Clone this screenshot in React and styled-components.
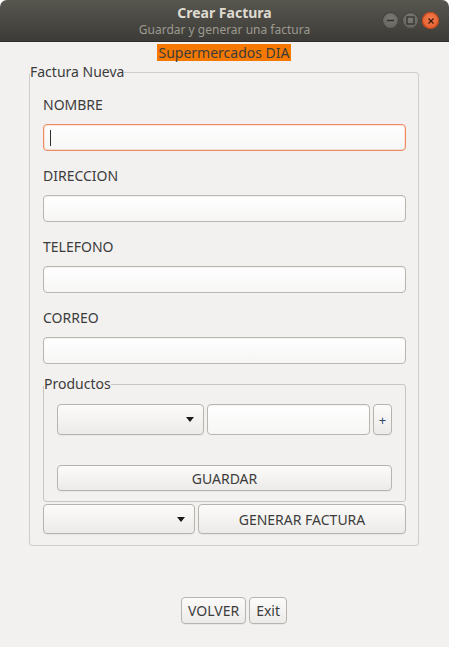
import React from 'react';
import styled, { createGlobalStyle } from 'styled-components';

const GlobalStyle = createGlobalStyle`
  html, body {
    margin: 0;
    padding: 0;
    background: #ffffff;
  }
  body {
    font-family: "Noto Sans", "DejaVu Sans", sans-serif;
    color: #3c3c3c;
  }
`;

const Window = styled.div`
  width: 449px;
  height: 647px;
  display: flex;
  flex-direction: column;
  background: #f2f1f0;
  border-radius: 7px 7px 0 0;
  overflow: hidden;
`;

const TitleBar = styled.div`
  height: 42px;
  flex: none;
  position: relative;
  display: flex;
  flex-direction: column;
  align-items: center;
  justify-content: center;
  gap: 2px;
  background: linear-gradient(#57564f, #3c3b37);
  border-bottom: 1px solid #2e2d2a;
  box-sizing: border-box;
`;

const Title = styled.div`
  color: #dfdbd2;
  font-weight: bold;
  font-size: 14px;
  line-height: 16px;
`;

const Subtitle = styled.div`
  color: #9d9a91;
  font-size: 12px;
  line-height: 14px;
`;

const WindowControls = styled.div`
  position: absolute;
  right: 10px;
  top: 12px;
  display: flex;
  gap: 3px;
`;

const Control = styled.div`
  width: 17px;
  height: 17px;
  border-radius: 50%;
  display: flex;
  align-items: center;
  justify-content: center;
  background: ${p => (p.close ? 'radial-gradient(circle at 50% 40%, #f27d4f, #e05424)' : 'radial-gradient(circle at 50% 40%, #7b7a74, #5c5b56)')};
  box-shadow: inset 0 0 0 1px ${p => (p.close ? '#b8451c' : '#3f3e3a')};
`;

const Body = styled.div`
  flex: 1;
  display: flex;
  flex-direction: column;
  align-items: center;
  padding-top: 2px;
  padding-right: 1px;
`;

const Banner = styled.div`
  background: #f57900;
  color: #3c3c3c;
  font-size: 14px;
  line-height: 17px;
  padding: 0 1px;
`;

const Group = styled.fieldset`
  margin: ${p => p.$top || 0}px 0 0 0;
  padding: 0;
  border: 1px solid ${p => (p.$inner ? '#c9c6c2' : '#cfcdca')};
  border-radius: 3px;
  width: ${p => p.$width}px;
  box-sizing: border-box;
  min-width: 0;
`;

const Legend = styled.legend`
  padding: 0;
  font-size: 14px;
  line-height: 16px;
  color: #3c3c3c;
`;

const GroupContent = styled.div`
  display: flex;
  flex-direction: column;
  padding: ${p => p.$pad};
`;

const Field = styled.div`
  display: flex;
  flex-direction: column;
  margin-bottom: ${p => (p.$last ? 0 : 15)}px;
`;

const Label = styled.div`
  font-size: 14px;
  line-height: 20px;
  margin-bottom: 9px;
  color: #3c3c3c;
`;

const TextInput = styled.div`
  height: ${p => p.$h || 27}px;
  box-sizing: border-box;
  border: 1px solid ${p => (p.$focus ? '#ef8a62' : '#b9b6b0')};
  border-radius: 4px;
  background: linear-gradient(#ffffff, #f6f6f5);
  box-shadow: ${p => (p.$focus ? 'inset 0 0 0 1px rgba(240,150,110,0.25)' : 'inset 0 1px 1px rgba(0,0,0,0.06)')};
  display: flex;
  align-items: center;
  padding-left: 6px;
  flex: ${p => (p.$grow ? 1 : 'none')};
`;

const Caret = styled.div`
  width: 1px;
  height: 16px;
  background: #2e2e2e;
`;

const Row = styled.div`
  display: flex;
  gap: 3px;
  margin-top: ${p => p.$top || 0}px;
`;

const ButtonBase = styled.div`
  height: ${p => p.$h || 27}px;
  box-sizing: border-box;
  border: 1px solid #b7b4ae;
  border-radius: 4px;
  background: linear-gradient(#fbfbfa, #edebe9);
  box-shadow: 0 1px 0 rgba(0,0,0,0.04);
  display: flex;
  align-items: center;
  justify-content: center;
  font-size: 14px;
  color: #3c3c3c;
  width: ${p => (p.$w ? p.$w + 'px' : 'auto')};
  flex: ${p => (p.$grow ? 1 : 'none')};
  padding: ${p => (p.$w || p.$grow ? 0 : '0 6px')};
`;

const Combo = styled(ButtonBase)`
  justify-content: flex-end;
  padding-right: 9px;
`;

const Arrow = styled.div`
  width: 0;
  height: 0;
  border-left: 4px solid transparent;
  border-right: 4px solid transparent;
  border-top: 5px solid #1a1a1a;
`;

const PlusButton = styled(ButtonBase)`
  font-size: 13px;
  color: #2e4a6e;
`;

const Footer = styled.div`
  display: flex;
  gap: 3px;
  margin-top: 51px;
  padding-left: 20px;
`;

const fields = ['NOMBRE', 'DIRECCION', 'TELEFONO', 'CORREO'];

export default function App() {
  return (
    <Window>
      <GlobalStyle />
      <TitleBar>
        <Title>Crear Factura</Title>
        <Subtitle>Guardar y generar una factura</Subtitle>
        <WindowControls>
          <Control>
            <svg width="9" height="9" viewBox="0 0 9 9">
              <line x1="1" y1="4.5" x2="8" y2="4.5" stroke="#2f2e2b" strokeWidth="1.3" />
            </svg>
          </Control>
          <Control>
            <svg width="9" height="9" viewBox="0 0 9 9">
              <rect x="1" y="1" width="7" height="7" fill="none" stroke="#2f2e2b" strokeWidth="1.2" />
            </svg>
          </Control>
          <Control close>
            <svg width="8" height="8" viewBox="0 0 8 8">
              <path d="M1.5 1.5 L6.5 6.5 M6.5 1.5 L1.5 6.5" stroke="#3a1a0c" strokeWidth="1.3" />
            </svg>
          </Control>
        </WindowControls>
      </TitleBar>
      <Body>
        <Banner>Supermercados DIA</Banner>
        <Group $top={3} $width={390}>
          <Legend>Factura Nueva</Legend>
          <GroupContent $pad="15px 12px 11px 13px">
            {fields.map((f, i) => (
              <Field key={f} $last={i === fields.length - 1}>
                <Label>{f}</Label>
                <TextInput $focus={i === 0}>{i === 0 && <Caret />}</TextInput>
              </Field>
            ))}
            <Group $top={12} $width={363} $inner>
              <Legend>Productos</Legend>
              <GroupContent $pad="12px 13px 10px 13px">
                <Row>
                  <Combo $w={147} $h={31}><Arrow /></Combo>
                  <TextInput $grow $h={31} />
                  <PlusButton $w={19} $h={31}>+</PlusButton>
                </Row>
                <Row $top={30}>
                  <ButtonBase $grow $h={26}>GUARDAR</ButtonBase>
                </Row>
              </GroupContent>
            </Group>
            <Row $top={2}>
              <Combo $w={152} $h={30}><Arrow /></Combo>
              <ButtonBase $grow $h={30}>GENERAR FACTURA</ButtonBase>
            </Row>
          </GroupContent>
        </Group>
        <Footer>
          <ButtonBase>VOLVER</ButtonBase>
          <ButtonBase>Exit</ButtonBase>
        </Footer>
      </Body>
    </Window>
  );
}
